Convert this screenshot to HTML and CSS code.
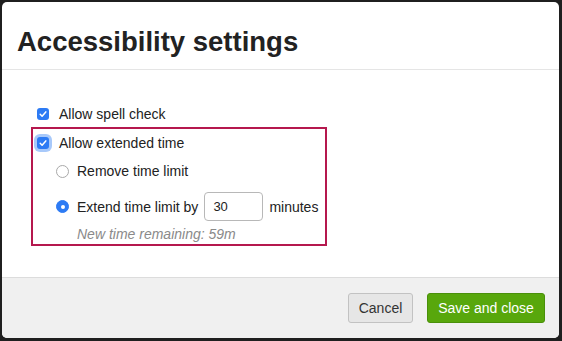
FILE: index.html
```html
<!DOCTYPE html>
<html>
<head>
<meta charset="utf-8">
<link rel="stylesheet" href="styles.css">
</head>
<body>
<div class="modal">
  <div class="modal-header">
    <h1 class="title">Accessibility settings</h1>
  </div>
  <div class="modal-body">
    <div class="row row-top">
      <span class="checkbox"><svg viewBox="0 0 12 12" width="12" height="12"><path d="M3.2 6.3 L5.1 8.2 L8.8 3.9" fill="none" stroke="#fff" stroke-width="1.5" stroke-linecap="round" stroke-linejoin="round"/></svg></span>
      <span class="label">Allow spell check</span>
    </div>
    <div class="group">
      <div class="row row-ext">
        <span class="checkbox focus"><svg viewBox="0 0 12 12" width="12" height="12"><path d="M3.2 6.3 L5.1 8.2 L8.8 3.9" fill="none" stroke="#fff" stroke-width="1.5" stroke-linecap="round" stroke-linejoin="round"/></svg></span>
        <span class="label">Allow extended time</span>
      </div>
      <div class="row row-radio first">
        <span class="radio"></span>
        <span class="label-r">Remove time limit</span>
      </div>
      <div class="row row-radio second">
        <span class="radio checked"></span>
        <span class="label-r">Extend time limit by</span>
        <span class="num-input">30</span>
        <span class="unit">minutes</span>
      </div>
      <div class="note">New time remaining: 59m</div>
    </div>
  </div>
  <div class="modal-footer">
    <button class="btn btn-cancel">Cancel</button>
    <button class="btn btn-save">Save and close</button>
  </div>
</div>
</body>
</html>
```
FILE: styles.css
```css
html, body {
  margin: 0;
  padding: 0;
}
body {
  background: #1f1f1f;
  width: 562px;
  height: 341px;
  padding: 2px 0 0 2px;
  box-sizing: border-box;
  font-family: "Liberation Sans", Arial, sans-serif;
  color: #222;
}
.modal {
  width: 557px;
  height: 336px;
  background: #fff;
  border-radius: 5px;
  display: flex;
  flex-direction: column;
  overflow: hidden;
}
.modal-header {
  padding: 24px 15px 11px 15px;
  border-bottom: 1px solid #e5e5e5;
}
.title {
  margin: 0;
  font-size: 27.5px;
  line-height: 32px;
  font-weight: bold;
  color: #222;
}
.modal-body {
  flex: 1;
  padding: 34px 0 0 29px;
}
.row {
  display: flex;
  align-items: center;
  height: 20px;
  font-size: 14px;
  line-height: 20px;
}
.row-top {
  padding-left: 6px;
}
.checkbox {
  width: 12px;
  height: 12px;
  border-radius: 3px;
  background: #2d7bf4;
  display: flex;
  margin-right: 10px;
  flex: none;
}
.checkbox.focus {
  box-shadow: 0 0 0 3px rgba(96, 156, 245, 0.55);
}
.group {
  display: inline-flex;
  flex-direction: column;
  margin-top: 3px;
  border: 2px solid #b5184e;
  padding: 4px 7px 0 4px;
  box-sizing: border-box;
  height: 119px;
}
.row-radio {
  padding-left: 19px;
}
.row-radio.first {
  margin-top: 8px;
}
.row-radio.second {
  margin-top: 11px;
  height: 29px;
}
.radio {
  width: 13px;
  height: 13px;
  border: 1px solid #a9a9a9;
  border-radius: 50%;
  box-sizing: border-box;
  margin-right: 8px;
  background: #fff;
  flex: none;
  display: flex;
  align-items: center;
  justify-content: center;
}
.radio.checked {
  background: #2d7bf4;
  border-color: #2d7bf4;
}
.radio.checked::after {
  content: "";
  width: 4px;
  height: 4px;
  border-radius: 50%;
  background: #fff;
}
.num-input {
  width: 59px;
  height: 29px;
  box-sizing: border-box;
  border: 1px solid #b8b8b8;
  border-radius: 4px;
  padding-left: 8px;
  margin-left: 6px;
  margin-right: 6px;
  line-height: 27px;
  font-size: 13px;
  color: #222;
}
.note {
  margin-top: 5px;
  padding-left: 40px;
  font-size: 14px;
  line-height: 16px;
  font-style: italic;
  color: #8a8a8a;
}
.modal-footer {
  height: 61px;
  box-sizing: border-box;
  border-top: 1px solid #dcdcdc;
  background: #f0f0f0;
  display: flex;
  justify-content: flex-end;
  align-items: flex-start;
  gap: 14px;
  padding: 15px 14px 0 0;
}
.btn {
  height: 30px;
  box-sizing: border-box;
  border-radius: 3px;
  font-family: "Liberation Sans", Arial, sans-serif;
  font-size: 14px;
  padding: 0;
  margin: 0;
}
.btn-cancel {
  width: 65px;
  background: #e6e6e6;
  border: 1px solid #c2c2c2;
  color: #333;
}
.btn-save {
  width: 118px;
  background: #58a70c;
  border: 1px solid #4a900a;
  color: #fff;
}
```
